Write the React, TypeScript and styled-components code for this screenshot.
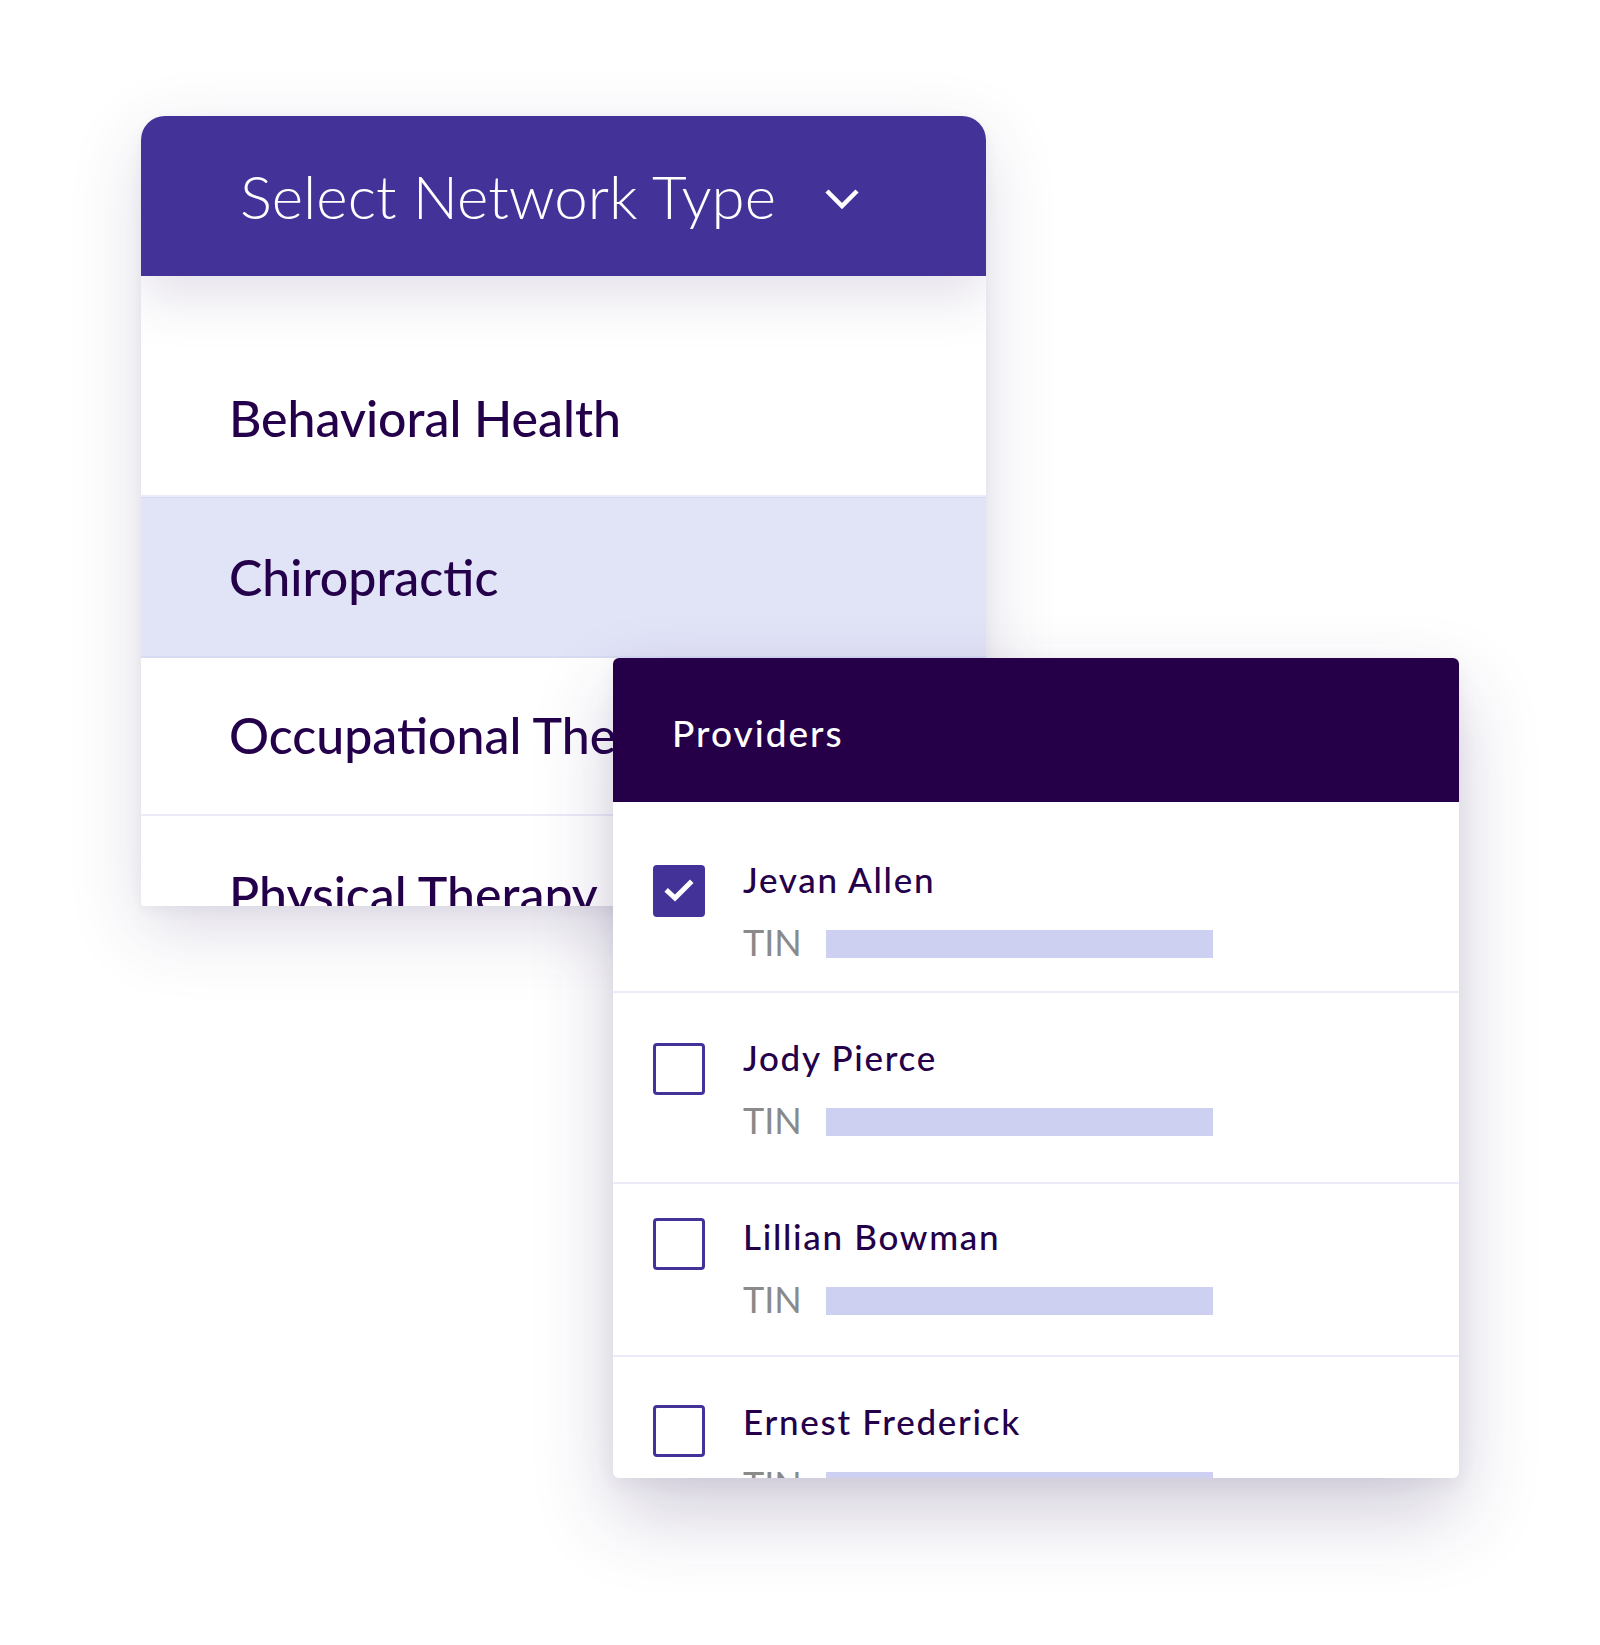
import React, { FC } from 'react';
import styled, { createGlobalStyle } from 'styled-components';

const GlobalStyle = createGlobalStyle`
  html, body {
    margin: 0;
    padding: 0;
    background: #ffffff;
  }
  body {
    font-family: Lato, 'Open Sans', sans-serif;
    -webkit-font-smoothing: antialiased;
  }
  * {
    box-sizing: border-box;
  }
`;

const Stage = styled.div`
  width: 1600px;
  height: 1645px;
  padding: 116px 0 0 141px;
  display: grid;
  grid-template-columns: 472px 373px 473px;
  grid-template-rows: 542px 248px 572px;
  overflow: hidden;
`;

const NetworkCard = styled.section`
  grid-column: 1 / 3;
  grid-row: 1 / 3;
  display: flex;
  flex-direction: column;
  background: #ffffff;
  border-radius: 24px 24px 4px 4px;
  overflow: hidden;
  box-shadow: 0 24px 70px rgba(58, 40, 100, 0.17),
    0 4px 14px rgba(58, 40, 100, 0.05);
`;

const NetworkHeader = styled.header`
  position: relative;
  z-index: 1;
  flex: 0 0 160px;
  display: flex;
  align-items: center;
  padding: 0 0 0 99px;
  gap: 48px;
  background: #433399;
  color: #ffffff;
  box-shadow: 0 26px 46px rgba(70, 50, 110, 0.13);
`;

const HeaderTitle = styled.h1`
  margin: 0;
  font-size: 60px;
  font-weight: 300;
  line-height: 1;
`;

const Chevron = styled.svg`
  width: 36px;
  height: 22px;
  margin-top: 6px;
`;

const OptionList = styled.ul`
  list-style: none;
  margin: 0;
  padding: 0;
  flex: 1;
`;

const OptionItem = styled.li<{ $height: number; $padTop: number; $active?: boolean }>`
  height: ${(p) => p.$height}px;
  padding: ${(p) => p.$padTop}px 0 0 88px;
  font-size: 50px;
  font-weight: 500;
  line-height: 1;
  color: #24004b;
  white-space: nowrap;
  background: ${(p) => (p.$active ? '#e1e3f7' : '#ffffff')};
  border-bottom: 2px solid ${(p) => (p.$active ? '#d9dbf4' : '#ecebfa')};
  border-top: ${(p) => (p.$active ? '1px solid #d9dbf4' : 'none')};
`;

const ProvidersCard = styled.section`
  grid-column: 2 / 4;
  grid-row: 2 / 4;
  position: relative;
  z-index: 2;
  display: flex;
  flex-direction: column;
  background: #ffffff;
  border-radius: 6px;
  overflow: hidden;
  box-shadow: 0 36px 80px rgba(50, 30, 90, 0.22),
    0 6px 20px rgba(50, 30, 90, 0.06);
`;

const ProvidersHeader = styled.header`
  flex: 0 0 144px;
  display: flex;
  align-items: center;
  padding: 4px 0 0 59px;
  background: #250049;
  color: #ffffff;
  font-size: 37px;
  font-weight: 500;
  line-height: 1;
  letter-spacing: 2px;
`;

const ProviderRow = styled.div<{ $padTop: number; $padBottom: number }>`
  display: flex;
  flex-shrink: 0;
  gap: 38px;
  padding: ${(p) => p.$padTop}px 0 ${(p) => p.$padBottom}px 40px;
  border-bottom: 2px solid #ecebfa;
`;

const CheckBox = styled.div<{ $checked?: boolean; $lift?: number }>`
  flex: 0 0 52px;
  width: 52px;
  height: 52px;
  margin-top: ${(p) => 3 - (p.$lift || 0)}px;
  border-radius: 4px;
  border: 3px solid #433399;
  background: ${(p) => (p.$checked ? '#433399' : '#ffffff')};
  display: flex;
  align-items: center;
  justify-content: center;
`;

const ProviderInfo = styled.div`
  display: flex;
  flex-direction: column;
  gap: 27px;
`;

const ProviderName = styled.div`
  font-size: 35px;
  font-weight: 500;
  line-height: 1;
  letter-spacing: 1.7px;
  color: #24004b;
`;

const TinLine = styled.div`
  display: flex;
  align-items: flex-start;
  gap: 24px;
`;

const TinLabel = styled.span`
  font-size: 36px;
  font-weight: 400;
  line-height: 1;
  color: #8a8a8a;
`;

const TinBar = styled.span`
  display: block;
  width: 387px;
  height: 28px;
  margin-top: 6px;
  background: #cdd0f1;
`;

const options = [
  { label: 'Behavioral Health', height: 221, padTop: 117 },
  { label: 'Chiropractic', height: 161, padTop: 54, active: true },
  { label: 'Occupational Therapy', height: 158, padTop: 52 },
  { label: 'Physical Therapy', height: 158, padTop: 53 },
];

const providers = [
  { name: 'Jevan Allen', checked: true, padTop: 60, padBottom: 31 },
  { name: 'Jody Pierce', padTop: 47, padBottom: 44 },
  { name: 'Lillian Bowman', padTop: 35, padBottom: 38, lift: 4 },
  { name: 'Ernest Frederick', padTop: 47, padBottom: 40, lift: 2 },
];

const Provider: FC<{
  name: string;
  checked?: boolean;
  padTop: number;
  padBottom: number;
  lift?: number;
}> = ({ name, checked, padTop, padBottom, lift }) => (
  <ProviderRow $padTop={padTop} $padBottom={padBottom}>
    <CheckBox $checked={checked} $lift={lift}>
      {checked ? (
        <svg width="30" height="24" viewBox="0 0 30 24">
          <path
            d="M4 12.5 L11 19 L26 4"
            fill="none"
            stroke="#ffffff"
            strokeWidth="5"
            strokeLinecap="square"
          />
        </svg>
      ) : null}
    </CheckBox>
    <ProviderInfo>
      <ProviderName>{name}</ProviderName>
      <TinLine>
        <TinLabel>TIN</TinLabel>
        <TinBar />
      </TinLine>
    </ProviderInfo>
  </ProviderRow>
);

const App: FC = () => {
  return (
    <>
      <GlobalStyle />
      <Stage>
        <NetworkCard>
          <NetworkHeader>
            <HeaderTitle>Select Network Type</HeaderTitle>
            <Chevron viewBox="0 0 36 22">
              <path d="M3 3 L18 18 L33 3" fill="none" stroke="#ffffff" strokeWidth="4.5" />
            </Chevron>
          </NetworkHeader>
          <OptionList>
            {options.map((o) => (
              <OptionItem key={o.label} $height={o.height} $padTop={o.padTop} $active={o.active}>
                {o.label}
              </OptionItem>
            ))}
          </OptionList>
        </NetworkCard>

        <ProvidersCard>
          <ProvidersHeader>Providers</ProvidersHeader>
          {providers.map((p) => (
            <Provider key={p.name} {...p} />
          ))}
        </ProvidersCard>
      </Stage>
    </>
  );
};

export default App;
